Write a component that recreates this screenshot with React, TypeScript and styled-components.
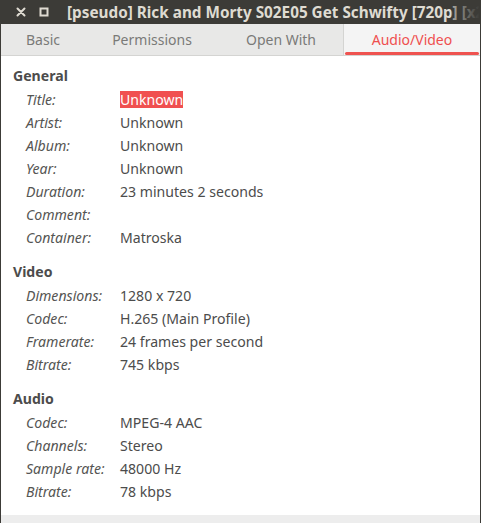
import React from "react";
import styled, { createGlobalStyle } from "styled-components";

const Global = createGlobalStyle`
  html, body { margin: 0; padding: 0; background: #3c3b37; }
  body { font-family: "Noto Sans", "DejaVu Sans", sans-serif; }
`;

const Window = styled.div`
  width: 481px;
  height: 523px;
  box-sizing: border-box;
  display: flex;
  flex-direction: column;
  background: #3c3b37;
  overflow: hidden;
`;

const TitleBar = styled.div`
  height: 24px;
  flex: none;
  display: flex;
  align-items: center;
  padding-left: 9px;
  color: #dfdbd2;
  position: relative;
  overflow: hidden;
  white-space: nowrap;
`;

const WinButton = styled.div`
  width: 23px;
  height: 24px;
  display: flex;
  align-items: center;
  justify-content: center;
  flex: none;
`;

const TitleText = styled.div`
  font-weight: 700;
  font-size: 15.3px;
  margin-left: 12px;
  white-space: nowrap;
`;

const Fade = styled.div`
  position: absolute;
  right: 0;
  top: 0;
  bottom: 0;
  width: 30px;
  background: linear-gradient(to right, rgba(60, 59, 55, 0.3), #3c3b37 95%);
`;

const Body = styled.div`
  flex: 1;
  display: flex;
  flex-direction: column;
  margin: 0 1px 2px 1px;
  background: #ffffff;
`;

const TabBar = styled.div`
  height: 31px;
  flex: none;
  display: flex;
  background: #e8e8e7;
  border-bottom: 1px solid #d4d4d2;
`;

const Tab = styled.div<{ $active?: boolean; $w: number }>`
  width: ${(p) => p.$w}px;
  flex: none;
  display: flex;
  align-items: center;
  justify-content: center;
  box-sizing: border-box;
  font-size: 14px;
  color: ${(p) => (p.$active ? "#ef4f4f" : "#7a7a78")};
  background: ${(p) => (p.$active ? "#f4f4f4" : "transparent")};
  border-left: ${(p) => (p.$active ? "1px solid #d4d4d2" : "none")};
  position: relative;
  &::after {
    content: "";
    display: ${(p) => (p.$active ? "block" : "none")};
    position: absolute;
    left: 1px;
    right: 1px;
    bottom: 0;
    height: 3px;
    border-radius: 2px;
    background: #ef5350;
  }
`;

const Content = styled.div`
  flex: 1;
  padding: 9px 0 0 12px;
  color: #4c4c4c;
  font-size: 14.1px;
`;

const Section = styled.section`
  margin-bottom: 12px;
`;

const Heading = styled.div`
  font-weight: 700;
  height: 21px;
  line-height: 21px;
  margin-bottom: 2px;
`;

const Row = styled.div`
  display: grid;
  grid-template-columns: 94px auto;
  height: 23px;
  line-height: 23px;
  padding-left: 13px;
  justify-items: start;
`;

const Label = styled.span`
  font-style: italic;
  color: #555553;
`;

const Value = styled.span<{ $selected?: boolean }>`
  color: ${(p) => (p.$selected ? "#ffffff" : "#4c4c4c")};
  background: ${(p) => (p.$selected ? "#f05050" : "transparent")};
  line-height: 17px;
  align-self: center;
`;

const Footer = styled.div`
  height: 10px;
  flex: none;
  background: #ededed;
`;

type Item = [string, string, boolean?];

const sections: { title: string; rows: Item[] }[] = [
  {
    title: "General",
    rows: [
      ["Title:", "Unknown", true],
      ["Artist:", "Unknown"],
      ["Album:", "Unknown"],
      ["Year:", "Unknown"],
      ["Duration:", "23 minutes 2 seconds"],
      ["Comment:", ""],
      ["Container:", "Matroska"],
    ],
  },
  {
    title: "Video",
    rows: [
      ["Dimensions:", "1280 x 720"],
      ["Codec:", "H.265 (Main Profile)"],
      ["Framerate:", "24 frames per second"],
      ["Bitrate:", "745 kbps"],
    ],
  },
  {
    title: "Audio",
    rows: [
      ["Codec:", "MPEG-4 AAC"],
      ["Channels:", "Stereo"],
      ["Sample rate:", "48000 Hz"],
      ["Bitrate:", "78 kbps"],
    ],
  },
];

const tabs: [string, number][] = [
  ["Basic", 84],
  ["Permissions", 134],
  ["Open With", 124],
  ["Audio/Video", 137],
];

export default function App() {
  return (
    <>
      <Global />
      <Window>
        <TitleBar>
          <WinButton>
            <svg width="10" height="10" viewBox="0 0 10 10">
              <path d="M1.5 1.5 L8.5 8.5 M8.5 1.5 L1.5 8.5" stroke="#dfdbd2" strokeWidth="2" strokeLinecap="round" />
            </svg>
          </WinButton>
          <WinButton>
            <svg width="10" height="10" viewBox="0 0 10 10">
              <rect x="1.5" y="1.5" width="7" height="7" fill="none" stroke="#dfdbd2" strokeWidth="2" />
            </svg>
          </WinButton>
          <TitleText>[pseudo] Rick and Morty S02E05 Get Schwifty [720p] [x265]</TitleText>
          <Fade />
        </TitleBar>
        <Body>
          <TabBar>
            {tabs.map(([t, w], i) => (
              <Tab key={t} $w={w} $active={i === 3}>
                {t}
              </Tab>
            ))}
          </TabBar>
          <Content>
            {sections.map((s) => (
              <Section key={s.title}>
                <Heading>{s.title}</Heading>
                {s.rows.map(([l, v, sel]) => (
                  <Row key={l}>
                    <Label>{l}</Label>
                    <Value $selected={sel}>{v}</Value>
                  </Row>
                ))}
              </Section>
            ))}
          </Content>
          <Footer />
        </Body>
      </Window>
    </>
  );
}
